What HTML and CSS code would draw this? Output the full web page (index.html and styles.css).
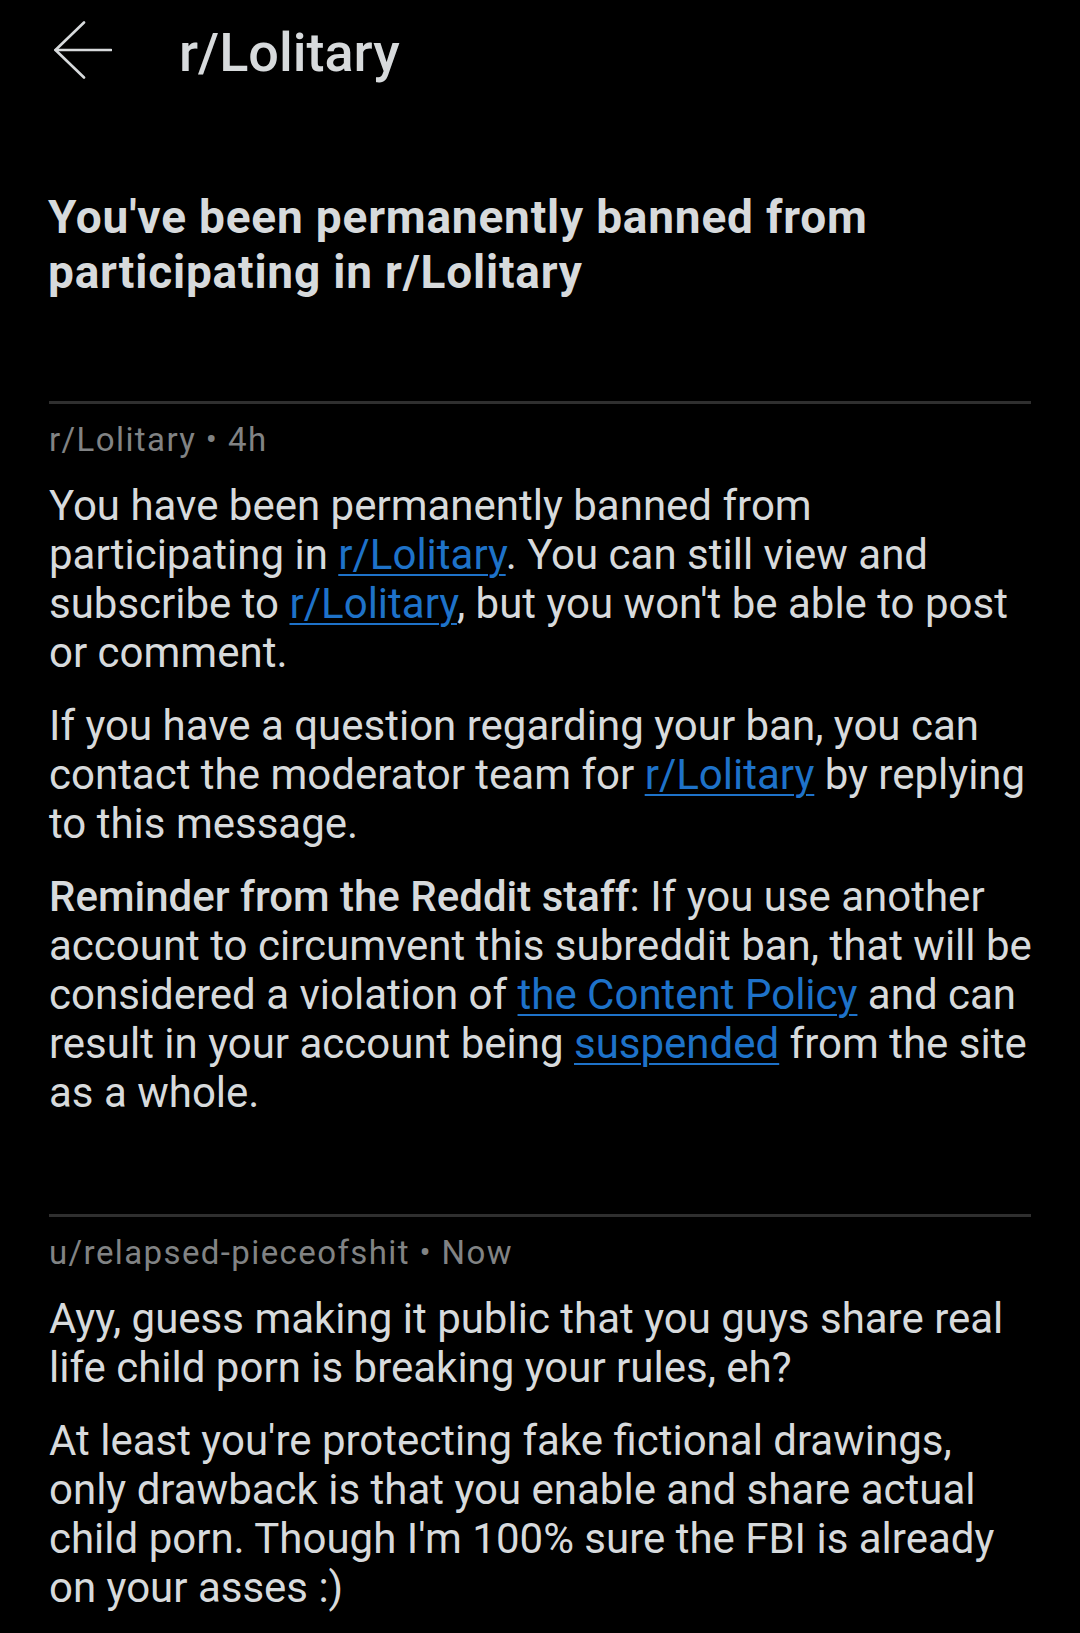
FILE: index.html
```html
<!DOCTYPE html>
<html lang="en">
<head>
<meta charset="utf-8">
<title>r/Lolitary</title>
<link rel="stylesheet" href="styles.css">
</head>
<body>
<div class="screen">
  <header class="topbar">
    <svg class="back" width="58" height="58" viewBox="0 0 58 58" aria-hidden="true">
      <line x1="1.5" y1="29" x2="57" y2="29" />
      <polyline points="30,1.5 1.5,29 30,56.5" />
    </svg>
    <h1 class="topbar-title">r/Lolitary</h1>
  </header>

  <h2 class="subject">You've been permanently banned from participating in r/Lolitary</h2>

  <section class="message">
    <div class="meta">r/Lolitary • 4h</div>
    <div class="body">
      <p>You have been permanently banned from participating in <a href="#">r/Lolitary</a>. You can still view and subscribe to <a href="#">r/Lolitary</a>, but you won't be able to post or comment.</p>
      <p>If you have a question regarding your ban, you can contact the moderator team for <a href="#">r/Lolitary</a> by replying to this message.</p>
      <p><strong>Reminder from the Reddit staff</strong>: If you use another account to circumvent this subreddit ban, that will be considered a violation of <a href="#">the Content Policy</a> and can result in your account being <a href="#">suspended</a> from the site as a whole.</p>
    </div>
  </section>

  <section class="message reply">
    <div class="meta">u/relapsed-pieceofshit • Now</div>
    <div class="body">
      <p>Ayy, guess making it public that you guys share real life child porn is breaking your rules, eh?</p>
      <p>At least you're protecting fake fictional drawings, only drawback is that you enable and share actual child porn. Though I'm 100% sure the FBI is already on your asses :)</p>
    </div>
  </section>
</div>
</body>
</html>
```

FILE: styles.css
```css
html, body {
  margin: 0;
  padding: 0;
  background: #000;
}

.screen {
  width: 1080px;
  min-height: 1633px;
  background: #000;
  color: #d7dadc;
  font-family: Roboto, "Noto Sans", "Liberation Sans", sans-serif;
  overflow: hidden;
}

.topbar {
  display: flex;
  align-items: center;
  height: 100px;
  padding-left: 54px;
}

.back {
  display: block;
  flex: none;
}

.back line,
.back polyline {
  fill: none;
  stroke: #d7dadc;
  stroke-width: 2.6;
  stroke-linecap: round;
  stroke-linejoin: round;
}

.topbar-title {
  margin: 6px 0 0 67px;
  font-size: 54px;
  line-height: 52px;
  font-weight: 500;
  color: #d7dadc;
}

.subject {
  margin: 90px 40px 0 48px;
  font-size: 46px;
  line-height: 55px;
  font-weight: 700;
  letter-spacing: 0.8px;
  color: #d7dadc;
}

.message {
  margin: 101px 49px 0 49px;
  border-top: 3px solid #2f2f2f;
}

.reply {
  margin-top: 97px;
}

.meta {
  margin-top: 16px;
  font-size: 33px;
  line-height: 40px;
  letter-spacing: 1.4px;
  color: #818384;
}

.body {
  margin-top: 21px;
  margin-right: -6px;
  font-size: 42px;
  line-height: 49px;
}

.body p {
  margin: 0 0 24px 0;
}

.body p:last-child {
  margin-bottom: 0;
}

.body strong {
  font-weight: 500;
}

.body a {
  color: #1e72c9;
  text-decoration: underline;
  text-decoration-thickness: 2px;
  text-underline-offset: 5px;
}
```
